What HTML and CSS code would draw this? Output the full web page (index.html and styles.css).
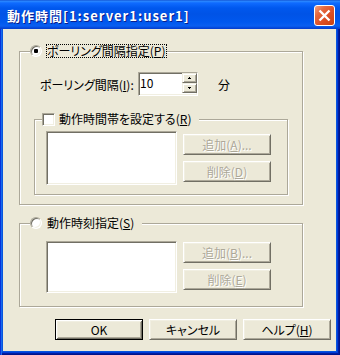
FILE: index.html
```html
<!DOCTYPE html>
<html lang="ja">
<head>
<meta charset="utf-8">
<title>動作時間</title>
<link rel="stylesheet" href="styles.css">
</head>
<body>
<div class="window">
  <div class="titlebar">
    <span class="title">動作時間[1:server1:user1]</span>
    <span class="close"><svg width="19" height="19" viewBox="0 0 19 19"><path d="M4.5 4.5 L14.5 14.5 M14.5 4.5 L4.5 14.5" stroke="#fff" stroke-width="2.4" fill="none"/></svg></span>
  </div>
  <div class="frame">
    <div class="client">
      <fieldset class="group g1">
        <legend class="lg lg1"><span class="lg-row"><span class="radio"><span class="dot"></span></span><span class="lbl focus">ポーリング間隔指定(<u>P</u>)</span></span></legend>
        <div class="g1-body">
          <div class="interval-row">
            <span class="interval-label">ポーリング間隔(<u>I</u>):</span>
            <div class="spin-edit sunken">
              <span class="edit-text">10</span>
              <span class="spin">
                <span class="spin-btn"><svg width="3" height="2" viewBox="0 0 3 2" shape-rendering="crispEdges"><rect x="1" y="0" width="1" height="1"/><rect x="0" y="1" width="3" height="1"/></svg></span>
                <span class="spin-btn"><svg width="3" height="2" viewBox="0 0 3 2" shape-rendering="crispEdges"><rect x="0" y="0" width="3" height="1"/><rect x="1" y="1" width="1" height="1"/></svg></span>
              </span>
            </div>
            <span class="unit">分</span>
          </div>
          <fieldset class="group g-inner">
            <legend class="lg lg-inner"><span class="lg-row"><span class="check sunken"></span><span class="lbl-plain">動作時間帯を設定する(<u>R</u>)</span></span></legend>
            <div class="list-row list-row-1">
              <div class="listbox listbox-1 sunken"></div>
              <div class="btn-col btn-col-1">
                <button class="btn" disabled>追加(<u>A</u>)...</button>
                <button class="btn" disabled>削除(<u>D</u>)</button>
              </div>
            </div>
          </fieldset>
        </div>
      </fieldset>
      <fieldset class="group g2">
        <legend class="lg lg2"><span class="lg-row"><span class="radio"></span><span class="lbl">動作時刻指定(<u>S</u>)</span></span></legend>
        <div class="list-row list-row-2">
          <div class="listbox listbox-2 sunken"></div>
          <div class="btn-col btn-col-2">
            <button class="btn" disabled>追加(<u>B</u>)...</button>
            <button class="btn" disabled>削除(<u>E</u>)</button>
          </div>
        </div>
      </fieldset>
      <div class="footer">
        <button class="btn default">OK</button>
        <button class="btn">キャンセル</button>
        <button class="btn">ヘルプ(<u>H</u>)</button>
      </div>
    </div>
  </div>
</div>
</body>
</html>
```
FILE: styles.css
```css
* { box-sizing: border-box; }
html, body { margin: 0; padding: 0; }
body {
  width: 340px;
  height: 355px;
  overflow: hidden;
  font-family: "Noto Sans CJK JP", "Noto Sans", sans-serif;
  font-size: 12px;
  font-feature-settings: "palt";
  color: #000;
}
.window {
  width: 340px;
  height: 355px;
  display: flex;
  flex-direction: column;
  background: #0855dd;
}
.titlebar {
  height: 29px;
  flex: none;
  display: flex;
  align-items: flex-start;
  padding-left: 7px;
  background: linear-gradient(180deg, #0a45c8 0, #2e8bff 1px, #0f6bff 3px, #0058ee 8px, #0053e6 14px, #0058ee 22px, #0a5ff0 26px, #0346d8 28px, #0a3cc8 29px);
}
.title {
  flex: 1;
  color: #fff;
  font-weight: bold;
  font-size: 13px;
  letter-spacing: 1px;
  line-height: 16px;
  margin-top: 8px;
  white-space: nowrap;
  text-shadow: 1px 1px #0b1f8c;
}
.close {
  width: 21px;
  height: 21px;
  margin: 5px 5px 0 0;
  border: 1px solid #fff;
  border-radius: 3px;
  background: linear-gradient(135deg, #f2a382 0%, #e56a40 28%, #dc4f26 60%, #c9410f 100%);
  display: flex;
  align-items: center;
  justify-content: center;
}
.frame {
  flex: 1;
  display: flex;
  padding: 0 4px 4px 3px;
  box-shadow: inset 1px 0 #0831d9, inset 2px 0 #166aee, inset -1px -1px #00138c, inset -2px -2px #001ea0, inset -3px -3px #003bda;
}
.client {
  flex: 1;
  background: #ece9d8;
  display: flex;
  flex-direction: column;
  padding-top: 15px;
}
.sunken {
  border: 1px solid;
  border-color: #aca899 #fff #fff #aca899;
  box-shadow: inset 1px 1px #716f64, inset -1px -1px #f1efe2;
  background: #fff;
}
.group {
  margin: 0 0 0 16px;
  padding: 0;
  width: 284px;
  min-width: 0;
  border: 1px solid #aca899;
  box-shadow: inset 1px 1px #fff, 1px 1px #fff;
}
.g2 { margin-top: 11px; }
.lg {
  padding: 0;
  margin-left: 10px;
  background: #ece9d8;
  height: 14px;
}
.lg1 { padding-right: 0; }
.lg2 { padding-right: 6px; }
.lg-inner { margin-left: 7px; padding-right: 8px; }
.lg-row {
  display: flex;
  align-items: center;
  height: 14px;
  white-space: nowrap;
}
.radio {
  width: 12px;
  height: 12px;
  border-radius: 50%;
  background: #fff;
  border: 1px solid;
  border-color: #aca899 #fff #fff #aca899;
  box-shadow: inset 1px 1px #716f64, inset -1px -1px #f1efe2;
  margin-right: 4px;
  display: flex;
  align-items: center;
  justify-content: center;
}
.dot {
  width: 4px;
  height: 4px;
  border-radius: 1px;
  background: #000;
}
.check {
  width: 13px;
  height: 13px;
  margin-right: 4px;
}
.lbl {
  height: 14px;
  line-height: 12px;
  border: 1px solid transparent;
  padding: 0 1px 0 0;
  display: flex;
  align-items: center;
}
.lbl.focus { border: 1px dotted #000; }
.lbl-plain {
  line-height: 14px;
}
.g1-body { padding: 14px 14px 9px 14px; }
.interval-row {
  display: flex;
  align-items: center;
  height: 24px;
  margin-left: 6px;
}
.interval-label { width: 98px; white-space: nowrap; }
.spin-edit {
  width: 60px;
  height: 24px;
  display: flex;
}
.edit-text {
  flex: 1;
  padding: 1px 0 0 1px;
  line-height: 18px;
}
.spin {
  width: 15px;
  display: flex;
  flex-direction: column;
  padding: 0 0 0 0;
}
.spin-btn {
  height: 10px;
  background: #ece9d8;
  border: 1px solid;
  border-color: #f1efe2 #716f64 #716f64 #f1efe2;
  box-shadow: inset 1px 1px #fff, inset -1px -1px #aca899;
  display: flex;
  align-items: center;
  justify-content: center;
}
.unit { margin-left: 20px; }
.g-inner {
  width: auto;
  margin: 16px 0 0 0;
}
.list-row { display: flex; align-items: flex-start; }
.list-row-1 { padding: 5px 0 9px 11px; }
.list-row-2 { padding: 11px 0 13px 26px; }
.listbox { width: 131px; }
.listbox-1 { height: 54px; }
.listbox-2 { height: 52px; }
.btn-col {
  display: flex;
  flex-direction: column;
  gap: 6px;
  margin-left: 6px;
}
.btn-col-1 { padding-top: 3px; }
.btn-col-2 { padding-top: 1px; }
.btn {
  font: inherit;
  font-feature-settings: "palt";
  width: 88px;
  height: 21px;
  padding: 0;
  margin: 0;
  background: #ece9d8;
  color: #000;
  border: 1px solid;
  border-color: #fff #716f64 #716f64 #fff;
  box-shadow: inset 1px 1px #f1efe2, inset -1px -1px #aca899;
  display: flex;
  align-items: center;
  justify-content: center;
  line-height: 14px;
  white-space: nowrap;
}
.btn:disabled {
  color: #aca899;
  text-shadow: 1px 1px #fff;
}
.btn.default {
  border: 1px solid #000;
  box-shadow: inset 1px 1px #fff, inset -1px -1px #716f64, inset 2px 2px #f1efe2, inset -2px -2px #aca899;
}
.footer {
  display: flex;
  justify-content: flex-end;
  gap: 6px;
  margin-top: 12px;
  padding-right: 5px;
}
```
